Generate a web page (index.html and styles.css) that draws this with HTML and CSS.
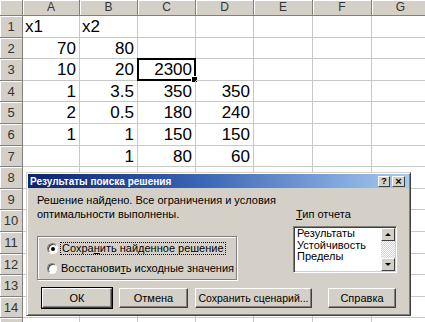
FILE: index.html
```html
<!DOCTYPE html>
<html lang="ru">
<head>
  <meta charset="UTF-8" />
  <title>Поиск решения</title>
  <link rel="stylesheet" href="styles.css">
</head>
<body>

  <div class="app">

    <!-- Лист -->
    <div class="sheet">
      <div class="corner"></div><div class="ch">A</div><div class="ch">B</div><div class="ch">C</div><div class="ch">D</div><div class="ch">E</div><div class="ch">F</div><div class="ch">G</div>
      <div class="rh">1</div><div class="c">x1</div><div class="c">x2</div><div class="c"></div><div class="c"></div><div class="c"></div><div class="c"></div><div class="c"></div>
      <div class="rh">2</div><div class="c n">70</div><div class="c n">80</div><div class="c"></div><div class="c"></div><div class="c"></div><div class="c"></div><div class="c"></div>
      <div class="rh">3</div><div class="c n">10</div><div class="c n">20</div><div class="c n active">2300</div><div class="c"></div><div class="c"></div><div class="c"></div><div class="c"></div>
      <div class="rh">4</div><div class="c n">1</div><div class="c n">3.5</div><div class="c n">350</div><div class="c n">350</div><div class="c"></div><div class="c"></div><div class="c"></div>
      <div class="rh">5</div><div class="c n">2</div><div class="c n">0.5</div><div class="c n">180</div><div class="c n">240</div><div class="c"></div><div class="c"></div><div class="c"></div>
      <div class="rh">6</div><div class="c n">1</div><div class="c n">1</div><div class="c n">150</div><div class="c n">150</div><div class="c"></div><div class="c"></div><div class="c"></div>
      <div class="rh">7</div><div class="c"></div><div class="c n">1</div><div class="c n">80</div><div class="c n">60</div><div class="c"></div><div class="c"></div><div class="c"></div>
      <div class="rh">8</div><div class="c"></div><div class="c"></div><div class="c"></div><div class="c"></div><div class="c"></div><div class="c"></div><div class="c"></div>
      <div class="rh">9</div><div class="c"></div><div class="c"></div><div class="c"></div><div class="c"></div><div class="c"></div><div class="c"></div><div class="c"></div>
      <div class="rh">10</div><div class="c"></div><div class="c"></div><div class="c"></div><div class="c"></div><div class="c"></div><div class="c"></div><div class="c"></div>
      <div class="rh">11</div><div class="c"></div><div class="c"></div><div class="c"></div><div class="c"></div><div class="c"></div><div class="c"></div><div class="c"></div>
      <div class="rh">12</div><div class="c"></div><div class="c"></div><div class="c"></div><div class="c"></div><div class="c"></div><div class="c"></div><div class="c"></div>
      <div class="rh">13</div><div class="c"></div><div class="c"></div><div class="c"></div><div class="c"></div><div class="c"></div><div class="c"></div><div class="c"></div>
      <div class="rh">14</div><div class="c"></div><div class="c"></div><div class="c"></div><div class="c"></div><div class="c"></div><div class="c"></div><div class="c"></div>
      <div class="rh"></div><div class="c"></div><div class="c"></div><div class="c"></div><div class="c"></div><div class="c"></div><div class="c"></div><div class="c"></div>
    </div>

    <!-- Окно результатов -->
    <div class="dialog">
      <div class="title">
        <span>Результаты поиска решения</span>
        <div class="tbtns">
          <span class="tbtn">?</span>
          <span class="tbtn close">×</span>
        </div>
      </div>

      <div class="dlg-body">
        <div class="left">
          <p class="msg">Решение найдено. Все ограничения и условия<br>оптимальности выполнены.</p>
          <div class="group">
            <div class="radio"><span class="dot on"></span><span class="focus">Сохра<u>н</u>ить найденное решение</span></div>
            <div class="radio"><span class="dot"></span><span class="txt">Восстанови<u>т</u>ь исходные значения</span></div>
          </div>
        </div>

        <div class="right">
          <div class="lbl"><u>Т</u>ип отчета</div>
          <div class="list">
            <div class="items">
              <div>Результаты</div>
              <div>Устойчивость</div>
              <div>Пределы</div>
            </div>
            <div class="vscroll">
              <span class="arr"><i class="up"></i></span>
              <span class="track"></span>
              <span class="arr"><i class="down"></i></span>
            </div>
          </div>
        </div>
      </div>

      <div class="buttons">
        <button class="btn default w-ok">ОК</button>
        <button class="btn w-cancel">Отмена</button>
        <button class="btn w-save">Сохранить сценарий...</button>
        <button class="btn w-help">Справка</button>
      </div>
    </div>

  </div>

</body>
</html>
```

FILE: styles.css
```css
body {
  margin: 0;
  background: #fff;
  font-family: "Liberation Sans", Arial, sans-serif;
}

.app {
  position: relative;
  width: 425px;
  height: 322px;
  overflow: hidden;
}

/* Лист Excel */
.sheet {
  display: grid;
  grid-template-columns: 23px 57px 58px 58px 58px 59px 59px 58px;
  grid-template-rows: 16px;
  grid-auto-rows: 21.6px;
  width: 430px;
}

.corner, .ch, .rh {
  box-sizing: border-box;
  background: #d4d0c8;
  border-right: 1px solid #808080;
  border-bottom: 1px solid #808080;
  box-shadow: inset 1px 1px #fff;
  color: #333;
}

.ch {
  font-size: 12px;
  line-height: 15px;
  text-align: center;
}

.rh {
  font-size: 13px;
  line-height: 21px;
  text-align: center;
}

.c {
  position: relative;
  box-sizing: border-box;
  border-right: 1px solid #c8c8c8;
  border-bottom: 1px solid #c8c8c8;
  font-size: 17px;
  line-height: 21px;
  padding: 0 2px;
  color: #000;
  white-space: nowrap;
}

.n {
  text-align: right;
  padding-right: 3px;
}

.active {
  border: 2px solid #000;
  margin: -1px 0 0 -1px;
  line-height: 19px;
  padding-right: 2px;
}

.active::after {
  content: "";
  position: absolute;
  right: -4px;
  bottom: -4px;
  width: 5px;
  height: 5px;
  background: #000;
  border: 1px solid #fff;
}

/* Диалог */
.dialog {
  position: absolute;
  left: 26px;
  top: 172px;
  width: 385px;
  height: 144px;
  box-sizing: border-box;
  padding: 1px;
  background: #d4d0c8;
  border: 1px solid;
  border-color: #d4d0c8 #404040 #404040 #d4d0c8;
  box-shadow: inset 1px 1px #fff, inset -1px -1px #808080;
  font-size: 11px;
  color: #000;
}

.title {
  display: flex;
  justify-content: space-between;
  align-items: center;
  height: 14px;
  padding: 0 4px 0 2px;
  background: linear-gradient(to right, #0a246a 0%, #3a64b4 45%, #a6caf0 100%);
  color: #fff;
  font-weight: bold;
  font-size: 10px;
}

.tbtns {
  display: flex;
  gap: 2px;
}

.tbtn {
  box-sizing: border-box;
  width: 12px;
  height: 11px;
  background: #d4d0c8;
  border: 1px solid;
  border-color: #fff #404040 #404040 #fff;
  color: #000;
  font-size: 9px;
  line-height: 9px;
  text-align: center;
}

.close {
  width: 13px;
  font-size: 11px;
}

.dlg-body {
  display: flex;
  padding: 5px 12px 0 9px;
}

.left {
  width: 256px;
}

.right {
  width: 104px;
}

.msg {
  margin: 0;
  line-height: 14px;
  white-space: nowrap;
}

.group {
  box-sizing: border-box;
  width: 200px;
  height: 44px;
  margin-top: 15px;
  padding-top: 1px;
  border: 1px solid #808080;
  box-shadow: 1px 1px #fff, inset 1px 1px #fff;
}

.radio {
  display: flex;
  align-items: center;
  height: 20px;
  padding-left: 9px;
  white-space: nowrap;
}

.dot {
  position: relative;
  box-sizing: border-box;
  width: 11px;
  height: 11px;
  margin-right: 2px;
  border-radius: 50%;
  background: #fff;
  border: 1px solid;
  border-color: #808080 #fff #fff #808080;
  box-shadow: inset 1px 1px #404040;
}

.dot.on::after {
  content: "";
  position: absolute;
  left: 3px;
  top: 3px;
  width: 4px;
  height: 4px;
  border-radius: 50%;
  background: #000;
}

.focus {
  padding: 0 1px;
  border: 1px dotted #000;
  line-height: 11px;
}

.txt {
  padding: 0 2px;
}

.lbl {
  margin-top: 14px;
  line-height: 14px;
  padding-left: 3px;
}

.list {
  display: flex;
  box-sizing: border-box;
  height: 47px;
  margin-top: 5px;
  background: #fff;
  border: 1px solid;
  border-color: #808080 #fff #fff #808080;
  box-shadow: inset 1px 1px #404040, inset -1px -1px #d4d0c8;
}

.items {
  flex: 1;
  padding: 1px 0 0 3px;
  line-height: 11.5px;
}

.vscroll {
  display: flex;
  flex-direction: column;
  width: 14px;
  padding: 1px 1px 1px 0;
}

.arr {
  display: flex;
  align-items: center;
  justify-content: center;
  box-sizing: border-box;
  height: 13px;
  background: #d4d0c8;
  border: 1px solid;
  border-color: #fff #404040 #404040 #fff;
}

.track {
  flex: 1;
  background: repeating-conic-gradient(#d4d0c8 0 25%, #fff 0 50%) 0 0 / 2px 2px;
}

.up {
  border: 3px solid transparent;
  border-bottom-color: #000;
  border-top: 0;
}

.down {
  border: 3px solid transparent;
  border-top-color: #000;
  border-bottom: 0;
}

.buttons {
  display: flex;
  padding: 8px 0 0 14px;
}

.btn {
  box-sizing: border-box;
  height: 20px;
  padding: 0;
  background: #d4d0c8;
  border: 1px solid;
  border-color: #fff #404040 #404040 #fff;
  box-shadow: inset -1px -1px #808080;
  font-family: "Liberation Sans", Arial, sans-serif;
  font-size: 11px;
  color: #000;
  white-space: nowrap;
}

.default {
  outline: 1px solid #000;
}

.w-ok { width: 70px; }
.w-cancel { width: 69px; margin-left: 7px; }
.w-save { width: 117px; margin-left: 7px; font-size: 10.5px; }
.w-help { width: 68px; margin-left: 16px; }
```
